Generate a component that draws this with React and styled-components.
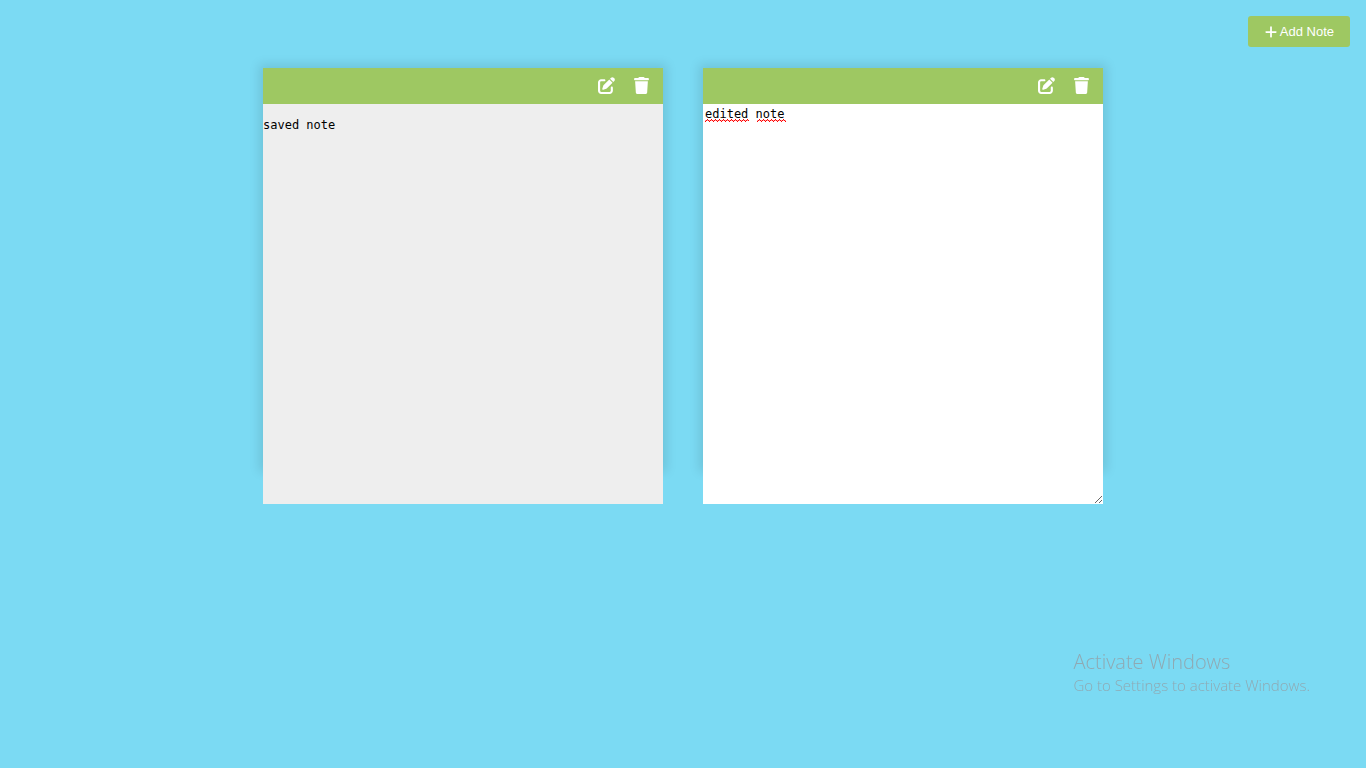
import React, { useState } from "react";
import styled, { createGlobalStyle } from "styled-components";
import { FaPenToSquare, FaTrash, FaPlus } from "react-icons/fa6";

const GlobalStyle = createGlobalStyle`
  * { box-sizing: border-box; }
  html, body { margin: 0; }
  body {
    min-height: 100vh;
    background: #7bdaf3;
    font-family: "Liberation Sans", Arial, sans-serif;
  }
`;

const Toolbar = styled.header`
  display: flex;
  justify-content: flex-end;
  padding: 16px;
`;

const AddButton = styled.button`
  display: flex;
  align-items: center;
  justify-content: center;
  gap: 2px;
  min-width: 102px;
  height: 31px;
  padding: 0 16px;
  border: none;
  border-radius: 3px;
  background: #9ec862;
  color: #fff;
  font: 13px "Liberation Sans", Arial, sans-serif;
  cursor: pointer;

  svg { font-size: 14px; }
`;

const Board = styled.main`
  display: flex;
  flex-wrap: wrap;
  justify-content: center;
  gap: 40px;
  padding: 5px 20px 40px;
`;

const NoteCard = styled.article`
  width: 400px;
  height: 400px;
  box-shadow: 0 0 10px 4px rgba(0, 0, 0, 0.1);
`;

const NoteTools = styled.div`
  display: flex;
  justify-content: flex-end;
  align-items: center;
  gap: 8px;
  height: 36px;
  padding: 0 8px 2px;
  background: #9ec862;
`;

const IconButton = styled.button`
  display: flex;
  padding: 0 5px;
  border: none;
  background: transparent;
  color: #fff;
  font-size: 17px;
  cursor: pointer;
`;

const noteText = `
  font: 12px/16px "DejaVu Sans Mono", "Liberation Mono", monospace;
  color: #000;
`;

const SavedText = styled.div`
  ${noteText}
  height: 400px;
  padding-top: 13px;
  background: #eee;
`;

const Editor = styled.div`
  position: relative;
  height: 400px;
`;

const NoteInput = styled.textarea`
  ${noteText}
  display: block;
  width: 100%;
  height: 100%;
  padding: 2px;
  border: none;
  outline: none;
  background: #fff;
`;

const SpellingMarks = styled.svg`
  position: absolute;
  top: 15px;
  left: 2px;
  width: 81px;
  height: 3px;
  pointer-events: none;
`;

const Watermark = styled.aside`
  position: fixed;
  right: 56px;
  bottom: 73px;
  color: #8fa9b3;
  font-family: "Open Sans", "Noto Sans", sans-serif;
  font-weight: 300;
  pointer-events: none;
`;

const WatermarkTitle = styled.div`
  font-size: 20px;
  line-height: 26px;
`;

const WatermarkText = styled.div`
  font-size: 15px;
  line-height: 20px;
`;

function Tools() {
  return (
    <NoteTools>
      <IconButton type="button" aria-label="Edit note"><FaPenToSquare /></IconButton>
      <IconButton type="button" aria-label="Delete note"><FaTrash /></IconButton>
    </NoteTools>
  );
}

export default function App() {
  const [draft, setDraft] = useState("edited note");
  return (
    <>
      <GlobalStyle />
      <Toolbar>
        <AddButton type="button"><FaPlus />Add Note</AddButton>
      </Toolbar>
      <Board>
        <NoteCard>
          <Tools />
          <SavedText>saved note</SavedText>
        </NoteCard>
        <NoteCard>
          <Tools />
          <Editor>
            <NoteInput
              aria-label="Note text"
              spellCheck={false}
              value={draft}
              onChange={(e) => setDraft(e.target.value)}
            />
            {draft === "edited note" && (
              <SpellingMarks viewBox="0 0 81 3" aria-hidden="true">
                <defs>
                  <pattern id="squiggle" width="4" height="3" patternUnits="userSpaceOnUse">
                    <path d="M0 2h1v1H0zM1 1h1v1H1zM2 0h1v1H2zM3 1h1v1H3z" fill="#f00" />
                    <path d="M0 1h1v1H0zM2 1h1v1H2z" fill="#f00" opacity="0.35" />
                  </pattern>
                </defs>
                <rect width="44" height="3" fill="url(#squiggle)" />
                <rect x="52" width="29" height="3" fill="url(#squiggle)" />
              </SpellingMarks>
            )}
          </Editor>
        </NoteCard>
      </Board>
      <Watermark>
        <WatermarkTitle>Activate Windows</WatermarkTitle>
        <WatermarkText>Go to Settings to activate Windows.</WatermarkText>
      </Watermark>
    </>
  );
}
